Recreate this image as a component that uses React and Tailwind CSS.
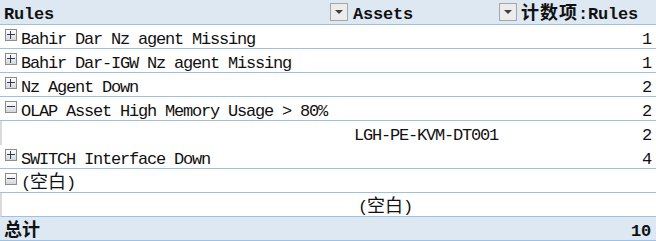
// Pivot table: Rules / Assets / count

const rows = [
  { icon: 'plus', label: 'Bahir Dar Nz agent Missing', count: '1' },
  { icon: 'plus', label: 'Bahir Dar-IGW Nz agent Missing', count: '1' },
  { icon: 'plus', label: 'Nz Agent Down', count: '2' },
  { icon: 'minus', label: 'OLAP Asset High Memory Usage > 80%', count: '2' },
  { child: true, asset: 'LGH-PE-KVM-DT001', count: '2', noLine: true },
  { icon: 'plus', label: 'SWITCH Interface Down', count: '4' },
  { icon: 'minus', blank: true, count: '' },
  { child: true, blankAsset: true, count: '' },
];

const Blank = () => (
  <span>
    (<span className="text-[18px] tracking-normal">空白</span>)
  </span>
);

const ToggleBox = ({ type }) => (
  <span className="absolute left-[5px] top-[4px] w-[12px] h-[12px] border border-[#8c8c8c] bg-gradient-to-b from-white to-[#d6d6d6] flex items-center justify-center">
    <span className="relative w-[8px] h-[8px]">
      <span className="absolute left-0 right-0 top-[3px] h-[1px] bg-[#2a3f66]" />
      {type === 'plus' && <span className="absolute top-0 bottom-0 left-[3px] w-[1px] bg-[#2a3f66]" />}
    </span>
  </span>
);

const Dropdown = () => (
  <span className="w-[18px] h-[18px] border border-[#a6a6a6] bg-[#ececec] flex items-center justify-center shrink-0">
    <span className="w-0 h-0 border-l-[4px] border-r-[4px] border-t-[4px] border-l-transparent border-r-transparent border-t-[#404040]" />
  </span>
);

const Row = ({ row }) => (
  <div
    className={`grid grid-cols-[328px_169px_1fr] h-[24px] ${row.noLine ? '' : 'border-b border-[#9bc2e6]'} ${row.child ? 'border-l-2 border-l-[#dadada]' : ''}`}
  >
    <div className="relative pl-[21px] pt-[6px] leading-[17px] whitespace-nowrap">
      {row.icon && <ToggleBox type={row.icon} />}
      {row.label}
      {row.blank && <Blank />}
    </div>
    <div className={`pt-[6px] leading-[17px] whitespace-nowrap ${row.child ? 'pl-[24px]' : 'pl-[26px]'}`}>
      {row.asset}
      {row.blankAsset && (
        <span className="pl-[4px]">
          <Blank />
        </span>
      )}
    </div>
    <div className="pt-[6px] leading-[17px] text-right pr-[5px]">{row.count}</div>
  </div>
);

export default function App() {
  return (
    <div
      className="w-[656px] h-[241px] bg-white text-[#111] text-[17px] tracking-[-1.2px] overflow-hidden"
      style={{ fontFamily: '"Liberation Mono", "Noto Sans CJK SC", monospace' }}
    >
      {/* HEADER */}
      <div className="grid grid-cols-[328px_169px_1fr] h-[25px] bg-[#dde8f3] border-b border-[#9bc2e6] font-bold tracking-[-0.2px]">
        <div className="pl-[4px] pt-[6px] leading-[17px]">Rules</div>
        <div className="flex items-start pl-[2px] pt-[3px]">
          <Dropdown />
          <span className="pl-[5px] pt-[3px] leading-[17px]">Assets</span>
        </div>
        <div className="flex items-start pl-[2px] pt-[3px]">
          <Dropdown />
          <span className="pl-[4px] pt-[3px] leading-[17px] whitespace-nowrap">
            <span className="text-[18px] tracking-[1px]">计数项</span>:Rules
          </span>
        </div>
      </div>

      {/* BODY */}
      {rows.map((row, i) => (
        <Row key={i} row={row} />
      ))}

      {/* TOTAL */}
      <div className="flex justify-between h-[24px] bg-[#dde8f3] border-b border-[#9bc2e6] font-bold">
        <div className="pl-[4px] pt-[6px] leading-[17px] text-[18px] tracking-normal">总计</div>
        <div className="pr-[5px] pt-[6px] leading-[17px] tracking-[-0.2px]">10</div>
      </div>
    </div>
  );
}
